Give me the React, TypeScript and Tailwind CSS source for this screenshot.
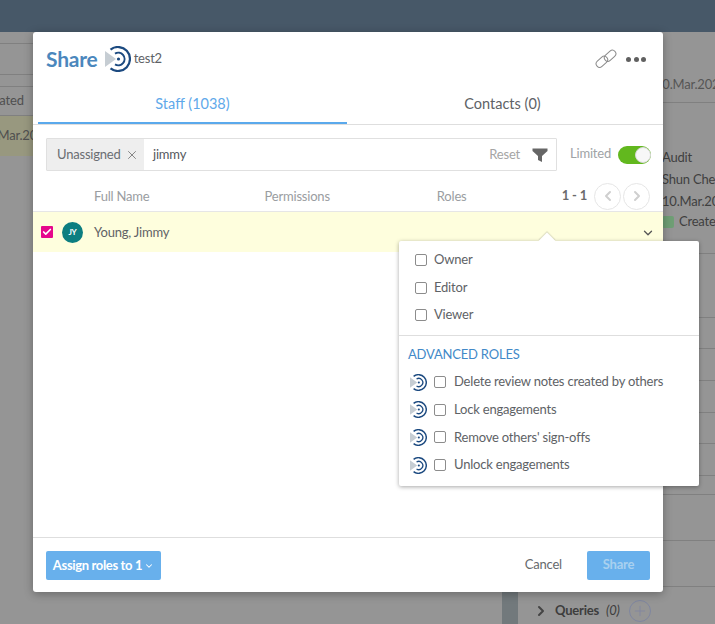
import { Check, ChevronDown, ChevronLeft, ChevronRight, Plus, X } from "lucide-react";

const advancedRoles = [
  "Delete review notes created by others",
  "Lock engagements",
  "Remove others' sign-offs",
  "Unlock engagements",
];

function Logo({ size }: { size: number }) {
  return (
    <svg width={size} height={size} viewBox="0 0 26 26" fill="none" className="shrink-0">
      <polygon points="0,5 0,21 11,13" fill="#c6cdd3" />
      <path d="M5.5 3.6A12 12 0 1 1 5.5 22.4" stroke="#1c4a80" strokeWidth="2.2" />
      <path d="M10 7.6A6.3 6.3 0 1 1 10 18.4" stroke="#1c4a80" strokeWidth="2" />
      <circle cx="13.5" cy="13" r="1.6" fill="#1c4a80" />
    </svg>
  );
}

function Box() {
  return <span className="block h-[12px] w-[12px] shrink-0 rounded-[2px] border border-[#8c8c8c] bg-white" />;
}

function BgRow({ h }: { h: number }) {
  return <div style={{ height: h }} className="border-b border-[#808080]" />;
}

export default function App() {
  return (
    <div className="relative h-[624px] w-[715px] overflow-hidden bg-[#959595] font-['Lato','Noto_Sans',sans-serif] text-[13px] tracking-[-0.2px] text-[#5e6266]">
      {/* page behind the dialog, already dimmed */}
      <div className="h-[32px] bg-[#475868]" />
      <div className="flex h-[592px]">
        <div className="w-[502px] text-[13px] text-[#4f4f4f]">
          <div className="h-[12px] border-b border-[#808080]" />
          <div className="h-[31px] border-b border-[#808080]" />
          <div className="h-[12px] border-b border-[#808080]" />
          <div className="flex h-[29px] items-center justify-start border-b border-[#808080]">
            <span className="ml-[-20px]">Created</span>
          </div>
          <div className="flex h-[40px] items-center bg-[#98987f]">
            <span className="ml-[-20px]">10.Mar.2026</span>
          </div>
        </div>
        <div className="flex w-[16px] flex-col">
          <div className="flex-1 bg-[#959595]" />
          <div className="h-[39px] bg-[#72797c]" />
        </div>
        <div className="relative w-[197px]">
          <div className="flex h-[71px] items-end border-b border-[#808080] pb-[8px] pl-[137px] text-[13px] text-[#555]">
            <span className="whitespace-nowrap">10.Mar.2026</span>
          </div>
          <div className="flex flex-col gap-[3px] pl-[144px] pt-[45px] text-[13px] leading-[19px] text-[#3f3f3f]">
            <span>Audit</span>
            <span className="whitespace-nowrap">Shun Chen</span>
            <span className="whitespace-nowrap">10.Mar.2026</span>
            <span className="mt-[-2px] flex items-center gap-[5px] whitespace-nowrap">
              <span className="h-[12px] w-[12px] shrink-0 rounded-[2px] bg-[#6f9f75]" />
              Created
            </span>
          </div>
          <div className="mt-[22px] border-t border-[#808080]">
            <BgRow h={64} />
            <BgRow h={31} />
            <BgRow h={32} />
            <BgRow h={32} />
            <BgRow h={31} />
            <BgRow h={32} />
            <BgRow h={19} />
            <BgRow h={46} />
            <BgRow h={46} />
          </div>
          <div className="flex h-[37px] items-center pl-[15px] pt-[10px] text-[#3d3d3d]">
            <ChevronRight size={16} strokeWidth={3} className="text-[#444]" />
            <span className="ml-[6px] font-bold">Queries</span>
            <span className="ml-[7px] italic">(0)</span>
            <span className="ml-[9px] flex h-[22px] w-[22px] items-center justify-center rounded-full border border-[#7f86a0] text-[#7f86a0]">
              <Plus size={16} strokeWidth={1.25} />
            </span>
          </div>
        </div>
      </div>

      {/* share dialog */}
      <div className="absolute left-[33px] top-[32px] flex h-[560px] w-[630px] flex-col rounded-[3px] bg-white shadow-[0_2px_10px_rgba(0,0,0,0.3)]">
        <div className="flex h-[53px] shrink-0 items-center pl-[13px] pr-[17px] pt-[1px]">
          <span className="text-[21px] font-bold text-[#4b87bd]">Share</span>
          <span className="ml-[7px]">
            <Logo size={26} />
          </span>
          <span className="ml-[3px] text-[13px]">test2</span>
          <svg width="22" height="20" viewBox="0 0 22 20" fill="none" stroke="#8a8a8a" strokeWidth="1" className="ml-auto">
            <rect x="0.4" y="9.2" width="13" height="7" rx="3.5" transform="rotate(-42 6.9 12.7)" />
            <rect x="8.6" y="3.2" width="13" height="7" rx="3.5" transform="rotate(-42 15.1 6.7)" />
          </svg>
          <span className="ml-[9px] flex gap-[2.5px]">
            <span className="h-[5px] w-[5px] rounded-full bg-[#606060]" />
            <span className="h-[5px] w-[5px] rounded-full bg-[#606060]" />
            <span className="h-[5px] w-[5px] rounded-full bg-[#606060]" />
          </span>
        </div>

        <div className="flex h-[40px] shrink-0 border-b border-[#dedede] px-[5px] text-[14.5px] tracking-normal">
          <div className="flex h-[39px] w-[309px] items-center justify-center border-b-[2px] border-[#5aa9ec] text-[#5fa9ea]">
            Staff (1038)
          </div>
          <div className="flex flex-1 items-center justify-center pb-[2px] text-[#5e6266]">Contacts (0)</div>
        </div>

        <div className="mt-[13px] flex h-[33px] shrink-0 items-center pl-[13px]">
          <div className="flex h-[33px] w-[511px] items-stretch rounded-[1px] border border-[#e0e0e0]">
            <span className="flex w-[97px] items-center gap-[4px] bg-[#eeeeee] pl-[10px] text-[#6a6d72]">
              Unassigned <X size={14} strokeWidth={1.5} className="text-[#777]" />
            </span>
            <span className="flex items-center pl-[9px] text-[#55585c]">jimmy</span>
            <span className="ml-auto flex items-center pr-[8px] text-[#a5a5a5]">
              Reset
              <svg width="16" height="14" viewBox="0 0 16 14" fill="#666" className="ml-[12px]">
                <path d="M0.5 0.5h15v2.5L10 8v6L6 12V8L0.5 3z" />
              </svg>
            </span>
          </div>
          <span className="ml-[13px] pb-[2px] text-[#a0a3a6]">Limited</span>
          <span className="ml-[7px] flex h-[18px] w-[33px] items-center justify-end rounded-full bg-[#62b81e]">
            <span className="h-[16px] w-[16px] rounded-full border border-[#d8d8d8] bg-[#f7f7f7]" />
          </span>
        </div>

        <div className="flex h-[40px] shrink-0 items-center text-[13px] text-[#9a9da1]">
          <span className="ml-[61px] mt-[12px]">Full Name</span>
          <span className="ml-[115px] mt-[12px]">Permissions</span>
          <span className="ml-[107px] mt-[12px]">Roles</span>
          <span className="ml-auto mt-[10px] font-bold text-[#6b6b6b]">1 - 1</span>
          <span className="ml-[7px] mr-[13px] mt-[10px] flex gap-[2px] text-[#cfcfcf]">
            <span className="flex h-[27px] w-[27px] items-center justify-center rounded-full border border-[#e6e6e6]">
              <ChevronLeft size={16} strokeWidth={3} />
            </span>
            <span className="flex h-[27px] w-[27px] items-center justify-center rounded-full border border-[#e6e6e6]">
              <ChevronRight size={16} strokeWidth={3} />
            </span>
          </span>
        </div>

        <div className="flex h-[41px] shrink-0 items-center border-t border-[#e6e6e6] bg-[#fefedd] pl-[8px] pr-[8px]">
          <span className="flex h-[12px] w-[12px] items-center justify-center rounded-[1px] bg-[#e6078c]">
            <Check size={10} strokeWidth={4} className="text-white" />
          </span>
          <span className="ml-[9px] flex h-[21px] w-[21px] items-center justify-center rounded-full bg-[#0c7e80] text-[8px] font-bold text-white">
            JY
          </span>
          <span className="ml-[11px] mt-[1px] text-[#5f6266]">Young, Jimmy</span>
          <ChevronDown size={14} strokeWidth={2.25} className="ml-auto mt-[2px] text-[#555]" />
        </div>

        <div className="flex-1" />

        <div className="flex h-[55px] shrink-0 items-start border-t border-[#dedede] pl-[13px] pr-[13px] pt-[13px]">
          <span className="flex h-[29px] w-[115px] items-center justify-center gap-[2px] rounded-[2px] bg-[#68b0ec] font-bold tracking-[-0.35px] text-white">
            Assign roles to 1 <ChevronDown size={10} strokeWidth={2.5} />
          </span>
          <span className="ml-auto flex h-[28px] items-center text-[#66696c]">Cancel</span>
          <span className="ml-[25px] flex h-[29px] w-[63px] items-center justify-center rounded-[2px] bg-[#68b0ec] pb-[1px] font-bold text-[#a9d0ef]">
            Share
          </span>
        </div>
      </div>

      {/* roles popover */}
      <div className="absolute left-[399px] top-[241px] w-[300px] rounded-[2px] bg-white shadow-[0_1px_4px_rgba(0,0,0,0.35)]">
        <span className="absolute left-[142px] top-[-6px] h-[12px] w-[12px] rotate-45 bg-white shadow-[-1px_-1px_1px_rgba(0,0,0,0.12)]" />
        <div className="relative flex h-[95px] flex-col justify-center gap-[10px] border-b border-[#dedede] pb-[1px] pl-[16px]">
          {["Owner", "Editor", "Viewer"].map((role) => (
            <div key={role} className="flex h-[17.5px] items-center gap-[7px]">
              <Box />
              <span>{role}</span>
            </div>
          ))}
        </div>
        <div className="pl-[9px] pt-[9px] text-[13px] leading-[18px] text-[#4289c8]">ADVANCED ROLES</div>
        <div className="flex flex-col gap-[11.7px] pb-[13px] pl-[11px] pt-[11px]">
          {advancedRoles.map((role) => (
            <div key={role} className="flex h-[16px] items-center">
              <Logo size={17} />
              <span className="ml-[7px]">
                <Box />
              </span>
              <span className="ml-[8px] whitespace-nowrap">{role}</span>
            </div>
          ))}
        </div>
      </div>
    </div>
  );
}
